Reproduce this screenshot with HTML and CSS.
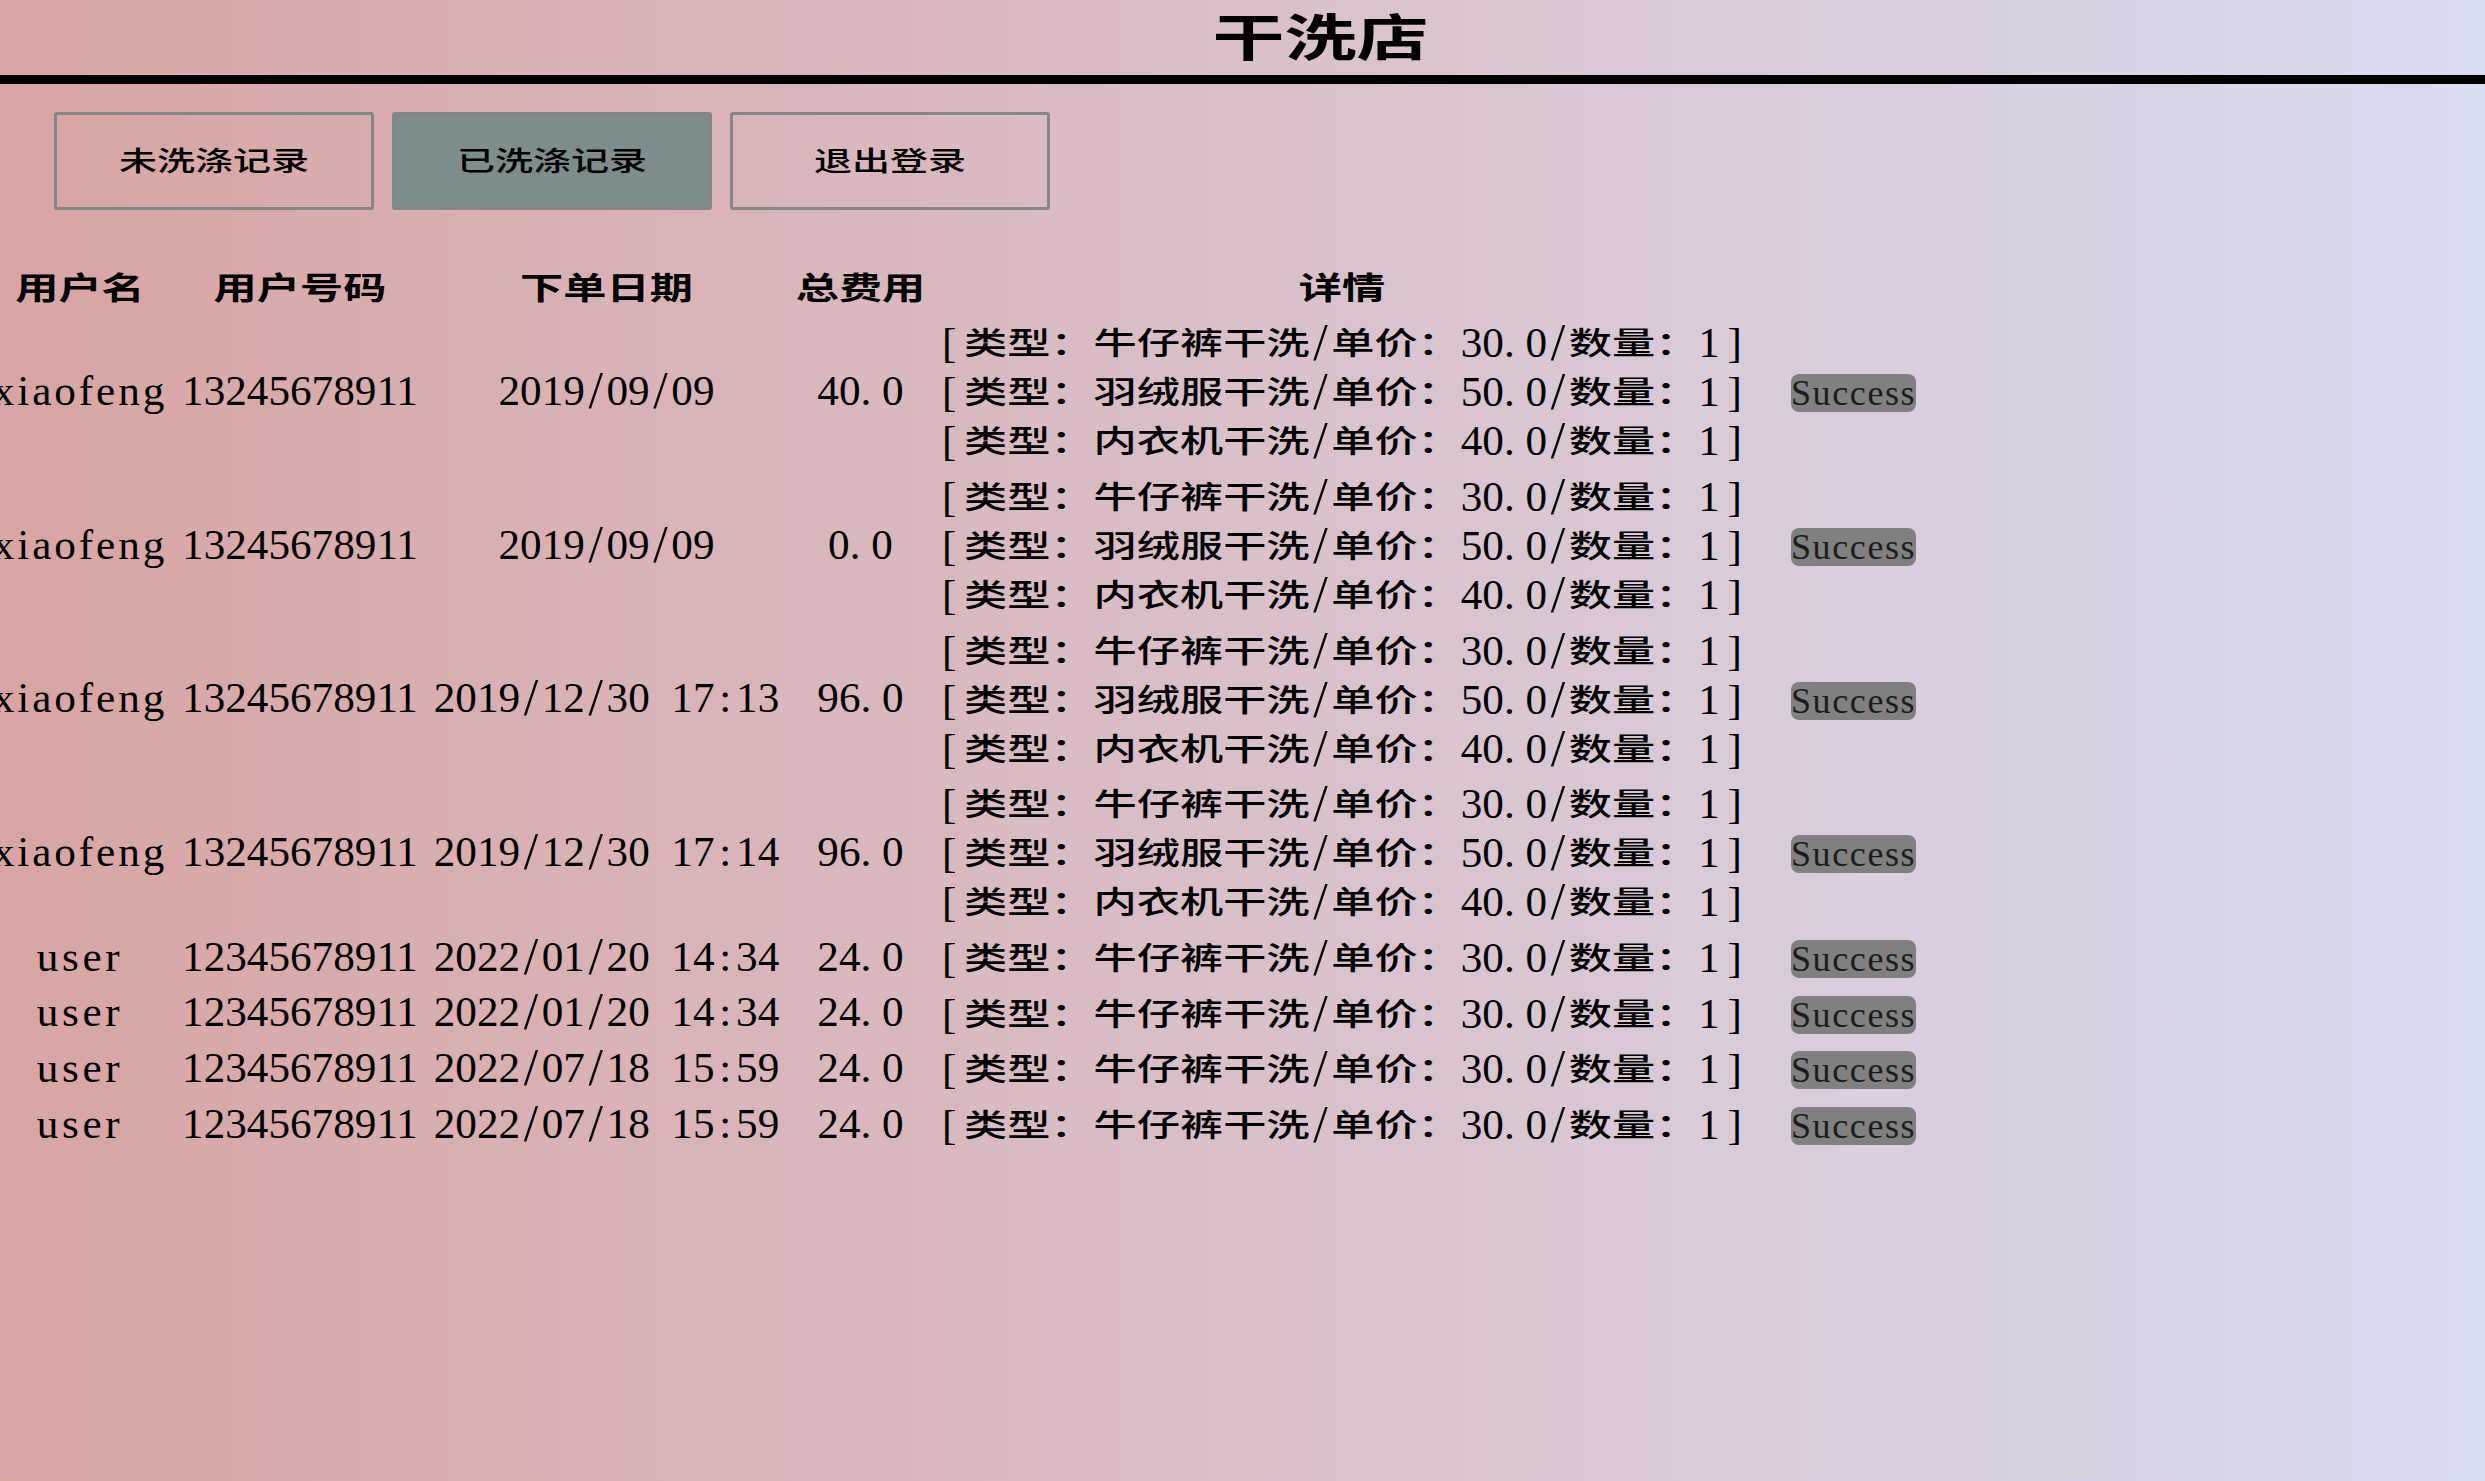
FILE: index.html
```html
<!DOCTYPE html>
<html lang="zh-CN">

<head>
  <meta charset="UTF-8">
  <title>干洗店</title>
  <link rel="stylesheet" href="styles.css">
</head>

<body>
  <header class="top">
    <h1 class="title"><span class="cjk">干洗店</span></h1>
  </header>

  <nav class="tabs">
    <button class="tab"><span class="cjk">未洗涤记录</span></button>
    <button class="tab active"><span class="cjk">已洗涤记录</span></button>
    <button class="tab"><span class="cjk">退出登录</span></button>
  </nav>

  <table class="orders">
    <colgroup>
      <col class="col-name">
      <col class="col-phone">
      <col class="col-date">
      <col class="col-total">
      <col class="col-detail">
      <col class="col-state">
    </colgroup>
    <thead>
      <tr>
        <th><span class="cjk">用户名</span></th>
        <th><span class="cjk">用户号码</span></th>
        <th><span class="cjk">下单日期</span></th>
        <th><span class="cjk">总费用</span></th>
        <th><span class="cjk">详情</span></th>
        <th></th>
      </tr>
    </thead>
    <tbody>
      <tr>
        <td class="name-long">xiaofeng</td>
        <td>13245678911</td>
        <td>2019<span class="slash">/</span>09<span class="slash">/</span>09</td>
        <td>40<span class="dot">.</span>0</td>
        <td class="detail">
          <div class="line"><span class="lb">[</span><span class="cjk">类型：牛仔裤干洗</span><span class="slash">/</span><span class="cjk">单价：</span>30<span class="dot">.</span>0<span class="slash">/</span><span class="cjk">数量：</span>1<span class="rb">]</span></div>
          <div class="line"><span class="lb">[</span><span class="cjk">类型：羽绒服干洗</span><span class="slash">/</span><span class="cjk">单价：</span>50<span class="dot">.</span>0<span class="slash">/</span><span class="cjk">数量：</span>1<span class="rb">]</span></div>
          <div class="line"><span class="lb">[</span><span class="cjk">类型：内衣机干洗</span><span class="slash">/</span><span class="cjk">单价：</span>40<span class="dot">.</span>0<span class="slash">/</span><span class="cjk">数量：</span>1<span class="rb">]</span></div>
        </td>
        <td class="action"><button class="state">Success</button></td>
      </tr>
      <tr>
        <td class="name-long">xiaofeng</td>
        <td>13245678911</td>
        <td>2019<span class="slash">/</span>09<span class="slash">/</span>09</td>
        <td>0<span class="dot">.</span>0</td>
        <td class="detail">
          <div class="line"><span class="lb">[</span><span class="cjk">类型：牛仔裤干洗</span><span class="slash">/</span><span class="cjk">单价：</span>30<span class="dot">.</span>0<span class="slash">/</span><span class="cjk">数量：</span>1<span class="rb">]</span></div>
          <div class="line"><span class="lb">[</span><span class="cjk">类型：羽绒服干洗</span><span class="slash">/</span><span class="cjk">单价：</span>50<span class="dot">.</span>0<span class="slash">/</span><span class="cjk">数量：</span>1<span class="rb">]</span></div>
          <div class="line"><span class="lb">[</span><span class="cjk">类型：内衣机干洗</span><span class="slash">/</span><span class="cjk">单价：</span>40<span class="dot">.</span>0<span class="slash">/</span><span class="cjk">数量：</span>1<span class="rb">]</span></div>
        </td>
        <td class="action"><button class="state">Success</button></td>
      </tr>
      <tr>
        <td class="name-long">xiaofeng</td>
        <td>13245678911</td>
        <td>2019<span class="slash">/</span>12<span class="slash">/</span>30 17<span class="colon">:</span>13</td>
        <td>96<span class="dot">.</span>0</td>
        <td class="detail">
          <div class="line"><span class="lb">[</span><span class="cjk">类型：牛仔裤干洗</span><span class="slash">/</span><span class="cjk">单价：</span>30<span class="dot">.</span>0<span class="slash">/</span><span class="cjk">数量：</span>1<span class="rb">]</span></div>
          <div class="line"><span class="lb">[</span><span class="cjk">类型：羽绒服干洗</span><span class="slash">/</span><span class="cjk">单价：</span>50<span class="dot">.</span>0<span class="slash">/</span><span class="cjk">数量：</span>1<span class="rb">]</span></div>
          <div class="line"><span class="lb">[</span><span class="cjk">类型：内衣机干洗</span><span class="slash">/</span><span class="cjk">单价：</span>40<span class="dot">.</span>0<span class="slash">/</span><span class="cjk">数量：</span>1<span class="rb">]</span></div>
        </td>
        <td class="action"><button class="state">Success</button></td>
      </tr>
      <tr>
        <td class="name-long">xiaofeng</td>
        <td>13245678911</td>
        <td>2019<span class="slash">/</span>12<span class="slash">/</span>30 17<span class="colon">:</span>14</td>
        <td>96<span class="dot">.</span>0</td>
        <td class="detail">
          <div class="line"><span class="lb">[</span><span class="cjk">类型：牛仔裤干洗</span><span class="slash">/</span><span class="cjk">单价：</span>30<span class="dot">.</span>0<span class="slash">/</span><span class="cjk">数量：</span>1<span class="rb">]</span></div>
          <div class="line"><span class="lb">[</span><span class="cjk">类型：羽绒服干洗</span><span class="slash">/</span><span class="cjk">单价：</span>50<span class="dot">.</span>0<span class="slash">/</span><span class="cjk">数量：</span>1<span class="rb">]</span></div>
          <div class="line"><span class="lb">[</span><span class="cjk">类型：内衣机干洗</span><span class="slash">/</span><span class="cjk">单价：</span>40<span class="dot">.</span>0<span class="slash">/</span><span class="cjk">数量：</span>1<span class="rb">]</span></div>
        </td>
        <td class="action"><button class="state">Success</button></td>
      </tr>
      <tr>
        <td class="name-short">user</td>
        <td>12345678911</td>
        <td>2022<span class="slash">/</span>01<span class="slash">/</span>20 14<span class="colon">:</span>34</td>
        <td>24<span class="dot">.</span>0</td>
        <td class="detail">
          <div class="line"><span class="lb">[</span><span class="cjk">类型：牛仔裤干洗</span><span class="slash">/</span><span class="cjk">单价：</span>30<span class="dot">.</span>0<span class="slash">/</span><span class="cjk">数量：</span>1<span class="rb">]</span></div>
        </td>
        <td class="action"><button class="state">Success</button></td>
      </tr>
      <tr>
        <td class="name-short">user</td>
        <td>12345678911</td>
        <td>2022<span class="slash">/</span>01<span class="slash">/</span>20 14<span class="colon">:</span>34</td>
        <td>24<span class="dot">.</span>0</td>
        <td class="detail">
          <div class="line"><span class="lb">[</span><span class="cjk">类型：牛仔裤干洗</span><span class="slash">/</span><span class="cjk">单价：</span>30<span class="dot">.</span>0<span class="slash">/</span><span class="cjk">数量：</span>1<span class="rb">]</span></div>
        </td>
        <td class="action"><button class="state">Success</button></td>
      </tr>
      <tr>
        <td class="name-short">user</td>
        <td>12345678911</td>
        <td>2022<span class="slash">/</span>07<span class="slash">/</span>18 15<span class="colon">:</span>59</td>
        <td>24<span class="dot">.</span>0</td>
        <td class="detail">
          <div class="line"><span class="lb">[</span><span class="cjk">类型：牛仔裤干洗</span><span class="slash">/</span><span class="cjk">单价：</span>30<span class="dot">.</span>0<span class="slash">/</span><span class="cjk">数量：</span>1<span class="rb">]</span></div>
        </td>
        <td class="action"><button class="state">Success</button></td>
      </tr>
      <tr>
        <td class="name-short">user</td>
        <td>12345678911</td>
        <td>2022<span class="slash">/</span>07<span class="slash">/</span>18 15<span class="colon">:</span>59</td>
        <td>24<span class="dot">.</span>0</td>
        <td class="detail">
          <div class="line"><span class="lb">[</span><span class="cjk">类型：牛仔裤干洗</span><span class="slash">/</span><span class="cjk">单价：</span>30<span class="dot">.</span>0<span class="slash">/</span><span class="cjk">数量：</span>1<span class="rb">]</span></div>
        </td>
        <td class="action"><button class="state">Success</button></td>
      </tr>
    </tbody>
  </table>
</body>

</html>
```

FILE: styles.css
```css
body {
  margin: 0;
  min-height: 1481px;
  overflow: hidden;
  background: linear-gradient(to right, #d8a4a4, #d9dcef);
  color: #000;
  font-family: "Liberation Serif", "Noto Sans CJK SC", serif;
}

/* wide, flat han glyphs: keep the advance, squash the height */
.cjk {
  display: inline-block;
  font-family: "Noto Sans CJK SC", sans-serif;
  font-weight: 500;
  transform: scaleY(.72);
}

.top {
  height: 75px;
  border-bottom: 9px solid #000;
  padding-left: 156px;
  text-align: center;
}

.title {
  margin: 0;
  font-size: 72px;
  line-height: 68px;
}

.title .cjk {
  font-weight: 700;
  transform: scaleY(.7);
}

.tabs {
  display: flex;
  gap: 18px;
  padding: 28px 0 0 54px;
}

.tab {
  width: 320px;
  height: 98px;
  padding: 0 0 4px;
  border: 3px solid #868686;
  border-radius: 3px;
  background: transparent;
  color: #000;
  font-family: inherit;
  font-size: 38px;
}

.tab.active {
  background: #7e8c8c;
}

.orders {
  margin: 47px 0 0 -14px;
  width: 2165px;
  table-layout: fixed;
  border-collapse: collapse;
  font-size: 43.2px;
  word-spacing: 10.8px;
}

.col-name { width: 188px; }
.col-phone { width: 252px; }
.col-date { width: 361px; }
.col-total { width: 147px; }
.col-detail { width: 816px; }
.col-state { width: 401px; }

.orders th {
  padding: 3px 0 0;
  line-height: 46px;
}

.orders th .cjk {
  font-weight: 700;
  transform: translateY(2px) scaleY(.72);
}

.orders td {
  padding: 6px 0 .7px;
  line-height: 49px;
  text-align: center;
  white-space: nowrap;
}

.orders .detail {
  padding: 3.35px 0;
}

.orders .action {
  padding: 3.35px 0 3.35px 41px;
}

.name-long {
  letter-spacing: 2.9px;
}

.name-short {
  letter-spacing: 3.6px;
}

/* half-width cells for the narrow punctuation */
.slash {
  padding: 0 3.6px;
  font-size: 52px;
  line-height: 0;
  vertical-align: -3px;
}

.dot {
  padding-right: 10.8px;
}

.colon {
  padding: 0 4.8px;
}

.lb {
  padding-right: 7.6px;
}

.rb {
  padding-left: 7.6px;
}

.line {
  height: 49px;
}

.line .cjk {
  transform: translateY(2px) scaleY(.72);
}

.state {
  display: block;
  width: 125px;
  height: 38px;
  margin-top: 11px;
  padding: 0;
  border: none;
  border-radius: 8px;
  background: #808080;
  color: #1c1c1c;
  font-family: inherit;
  font-size: 36px;
  letter-spacing: 1.6px;
  line-height: 38px;
  overflow: hidden;
}
```
